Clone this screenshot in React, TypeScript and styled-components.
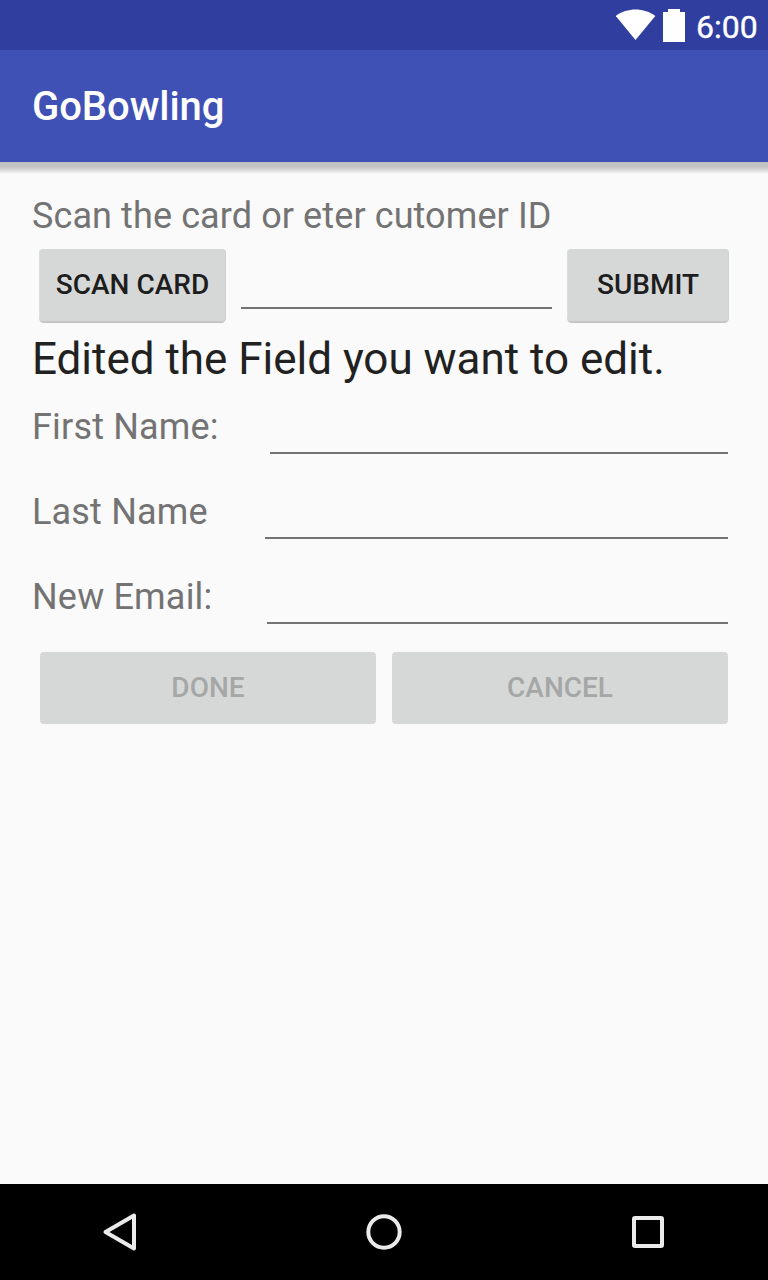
import React from "react";
import styled, { createGlobalStyle } from "styled-components";

const GlobalStyle = createGlobalStyle`
  *, *::before, *::after { box-sizing: border-box; }
  body { margin: 0; background: #fafafa; }
`;

const Screen = styled.div`
  display: flex;
  flex-direction: column;
  width: 768px;
  height: 1280px;
  background: #fafafa;
  font-family: Roboto, sans-serif;
  overflow: hidden;
`;

const StatusBar = styled.div`
  display: flex;
  justify-content: flex-end;
  height: 50px;
  padding-right: 10px;
  background: #303f9f;
`;

const StatusIcons = styled.svg`
  width: 72px;
  height: 50px;
  margin-right: 8px;
`;

const Clock = styled.span`
  width: 62px;
  color: #fff;
  font-size: 32px;
  font-weight: 400;
  line-height: 54px;
  -webkit-text-stroke: 0.35px #fff;
  white-space: nowrap;
`;

const AppBar = styled.header`
  height: 112px;
  padding-left: 32px;
  background: #3f51b5;
`;

const Title = styled.h1`
  margin: 0;
  color: #fff;
  font-size: 40px;
  font-weight: 500;
  line-height: 114px;
  letter-spacing: -0.06px;
`;

const BarShadow = styled.div`
  height: 12px;
  background: linear-gradient(#c1c1c1 0, #c4c4c4 40%, #dcdcdc 70%, #f4f4f4 95%, #fafafa 100%);
`;

const Content = styled.main`
  flex: 1;
  padding: 20px 40px 0 32px;
`;

const Label = styled.label<{ $width?: number }>`
  display: block;
  flex: none;
  width: ${({ $width }) => ($width ? `${$width}px` : "auto")};
  color: #737373;
  font-size: 36px;
  line-height: 44px;
  letter-spacing: ${({ $width }) => ($width ? "0.18px" : "0.1px")};
  white-space: nowrap;
`;

const ScanRow = styled.div`
  display: flex;
  gap: 16px;
  height: 72px;
  margin-top: 11px;
  padding-left: 8px;
`;

const Input = styled.input`
  flex: 1;
  min-width: 0;
  height: 60px;
  padding: 0;
  border: 0;
  border-bottom: 2px solid #737373;
  background: transparent;
  color: #212121;
  font: 36px Roboto, sans-serif;
  outline: 0;
`;

const Button = styled.button<{ $width?: number }>`
  flex: ${({ $width }) => ($width ? `0 0 ${$width}px` : "1")};
  height: 72px;
  padding: 0;
  border: 0;
  border-radius: 4px;
  background: #d6d8d7;
  box-shadow: -1px 0 0 #dcdedd, 1px 0 0 #d0d2d1, 0 1px 0 1px #c4c5c4, 0 2px 1px rgba(0, 0, 0, 0.15);
  color: #1d1d1d;
  font: 500 28px/70px Roboto, sans-serif;
  white-space: nowrap;

  &:disabled {
    box-shadow: none;
    color: #a5a7a6;
  }
`;

const Heading = styled.h2`
  margin: 12px 0 0;
  color: #212121;
  font-size: 44px;
  font-weight: 400;
  line-height: 52px;
  letter-spacing: -0.02px;
  white-space: nowrap;
`;

const FieldRow = styled.div`
  display: flex;
  align-items: flex-end;
  height: 85px;

  ${Label} {
    margin-bottom: 5px;
  }
`;

const Fields = styled.div`
  margin-top: -16px;
`;

const Actions = styled.div`
  display: flex;
  gap: 16px;
  margin-top: 28px;
  padding-left: 8px;
`;

const NavBar = styled.nav`
  display: flex;
  justify-content: space-between;
  height: 96px;
  padding: 0 72px;
  background: #000;
`;

const NavIcon = styled.svg`
  width: 96px;
  height: 96px;
  fill: none;
  stroke: #ebebeb;
  stroke-width: 4;
  stroke-linejoin: round;
`;

const fields = [
  { id: "first", label: "First Name:", width: 238 },
  { id: "last", label: "Last Name", width: 233 },
  { id: "email", label: "New Email:", width: 235 },
];

export default function App() {
  return (
    <Screen>
      <GlobalStyle />
      <StatusBar>
        <StatusIcons viewBox="0 0 72 50" fill="#fff">
          <path d="M-0.3 16 C10.5 7.2 28.5 7.2 39.3 16 L19.5 40 Z" />
          <path d="M52 9h12v3h5v30h-22v-30h5z" />
        </StatusIcons>
        <Clock>6:00</Clock>
      </StatusBar>
      <AppBar>
        <Title>GoBowling</Title>
      </AppBar>
      <BarShadow />
      <Content>
        <Label htmlFor="customer">Scan the card or eter cutomer ID</Label>
        <ScanRow>
          <Button $width={185}>SCAN CARD</Button>
          <Input id="customer" />
          <Button $width={160}>SUBMIT</Button>
        </ScanRow>
        <Heading>Edited the Field you want to edit.</Heading>
        <Fields>
          {fields.map(({ id, label, width }) => (
            <FieldRow key={id}>
              <Label htmlFor={id} $width={width}>{label}</Label>
              <Input id={id} />
            </FieldRow>
          ))}
        </Fields>
        <Actions>
          <Button disabled>DONE</Button>
          <Button disabled>CANCEL</Button>
        </Actions>
      </Content>
      <NavBar>
        <NavIcon viewBox="0 0 96 96">
          <path d="M33.5 48 62 31.5v33z" />
        </NavIcon>
        <NavIcon viewBox="0 0 96 96">
          <circle cx="48" cy="48" r="15.7" />
        </NavIcon>
        <NavIcon viewBox="0 0 96 96">
          <rect x="34" y="34" width="28" height="28" rx="1" />
        </NavIcon>
      </NavBar>
    </Screen>
  );
}
